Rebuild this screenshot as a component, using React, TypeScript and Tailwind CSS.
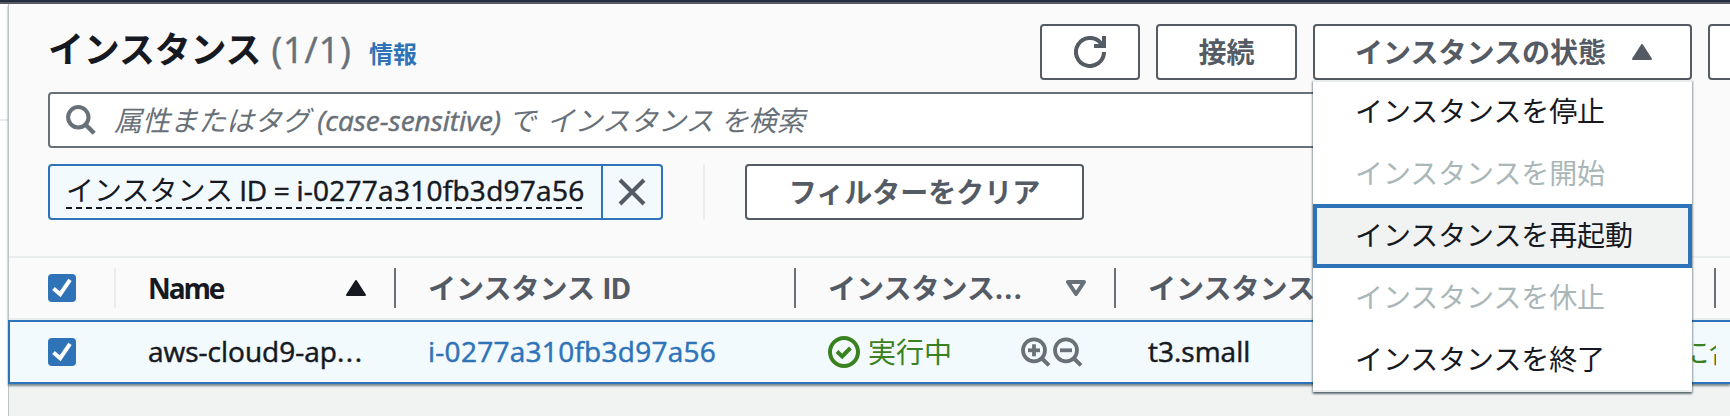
import React from "react";

const JP = "font-['Open_Sans','Noto_Sans_CJK_JP',sans-serif]";

function CheckBox() {
  return (
    <span className="block h-7 w-7 shrink-0 rounded-[4px] bg-[#2e73b8]">
      <svg viewBox="0 0 28 28" className="h-7 w-7" fill="none" stroke="#fff" strokeWidth="4">
        <path d="M5.5 14.5 L12.2 20.2 L22 5.8" />
      </svg>
    </span>
  );
}

function Triangle({ className }: { className: string }) {
  return (
    <svg viewBox="0 0 20 16" className={"h-4 w-5 shrink-0 " + className} fill="currentColor" stroke="currentColor" strokeWidth="2" strokeLinejoin="round">
      <path d="M10 1 L19 15 H1 Z" />
    </svg>
  );
}

function Magnifier({ sign }: { sign: "plus" | "minus" }) {
  return (
    <svg viewBox="0 0 30 30" className="h-[30px] w-[30px] shrink-0" fill="none" stroke="#687078" strokeWidth="3.8">
      <circle cx="13" cy="13.3" r="11" />
      <path d="M20.5 21 L28 28.4" strokeWidth="4" />
      <path d="M7 13.3 H19" />
      {sign === "plus" && <path d="M13 7.3 V19.3" />}
    </svg>
  );
}

function Button({ className, children }: { className: string; children?: React.ReactNode }) {
  return (
    <button
      className={
        "flex h-14 shrink-0 items-center rounded-[4px] border-2 border-[#545b64] bg-white text-[28px] leading-none font-bold whitespace-nowrap text-[#545b64] " +
        className
      }
    >
      {children}
    </button>
  );
}

const menuItems = [
  { label: "インスタンスを停止", state: "first" },
  { label: "インスタンスを開始", state: "disabled" },
  { label: "インスタンスを再起動", state: "active" },
  { label: "インスタンスを休止", state: "disabled" },
  { label: "インスタンスを終了", state: "last" },
];

const itemStyle: Record<string, string> = {
  first: "h-[61px] px-[42px] pb-[3px] text-[#16191f]",
  last: "h-[61px] px-[42px] pb-[2px] text-[#16191f]",
  disabled: "h-[62px] px-[42px] pb-[2px] text-[#aab7b8]",
  active: "-my-px h-16 border-4 border-[#2e73b8] bg-[#f1f3f3] px-[38px] pb-[2px] text-[#16191f]",
};

function StateMenu() {
  return (
    <div className="absolute top-14 left-0 w-[379px] border-y-2 border-[#eaeded] bg-white font-normal tracking-[-0.1px] shadow-[0_2px_2px_0_rgba(0,28,36,0.45),1px_1px_2px_0_rgba(0,28,36,0.25),-1px_1px_2px_0_rgba(0,28,36,0.25)]">
      {menuItems.map((item) => (
        <div key={item.label} className={"flex items-center text-left text-[28px] leading-none " + itemStyle[item.state]}>
          {item.label}
        </div>
      ))}
    </div>
  );
}

export default function App() {
  return (
    <div className={"flex h-[416px] w-[1730px] flex-col overflow-hidden bg-white text-[28px] leading-none whitespace-nowrap text-[#16191f] " + JP}>
      <div className="h-1 shrink-0 border-b-2 border-[#545b64] bg-[#232f3e]" />
      <div className="flex flex-1">
        <aside className="w-2 shrink-0">
          <div className="h-[117px] border-b-2 border-[#eaeded]" />
        </aside>
        <main className="flex w-[1722px] flex-col border-l border-[#bcc4c8] bg-[#f1f3f3]">
          <section className="-ml-px flex h-[380px] flex-col border-l border-[#bcc4c8] bg-[#fafafa] shadow-[0_2px_2px_0_rgba(0,28,36,0.5)]">
            <header className="flex h-[88px] shrink-0 pt-5 pl-[39px]">
              <div className="flex w-[992px] shrink-0 items-baseline pt-2">
                <h1 className="text-[36px] leading-9 font-bold tracking-[-0.2px]">インスタンス</h1>
                <span className="ml-[10px] text-[36px] leading-9 tracking-[1px] text-[#687078] [-webkit-text-stroke:0.5px]">(1/1)</span>
                <a className="ml-[17px] text-[24px] leading-6 font-bold text-[#2e73b8]">情報</a>
              </div>
              <div className="flex gap-4">
                <Button className="w-[100px] justify-center">
                  <svg viewBox="0 0 32 32" className="h-8 w-8" fill="none" stroke="currentColor" strokeWidth="4">
                    <path d="M30 16 A14 14 0 1 1 26.4 6.6 L29 10" />
                    <path d="M30 0 V10 H20" />
                  </svg>
                </Button>
                <Button className="w-[141px] justify-center">接続</Button>
                <div className="relative z-10">
                  <Button className="w-[379px] pl-10">
                    インスタンスの状態
                    <Triangle className="ml-[26px]" />
                  </Button>
                  <StateMenu />
                </div>
                <Button className="w-[160px]" />
              </div>
            </header>

            <div className="ml-[39px] flex h-14 w-[1400px] shrink-0 items-center rounded-[4px] border-2 border-[#687078] bg-white pl-4 text-[#687078]">
              <svg viewBox="0 0 30 30" className="h-[30px] w-[30px]" fill="none" stroke="currentColor" strokeWidth="4">
                <circle cx="12.3" cy="12.3" r="10.2" />
                <path d="M19.2 19.2 L28.2 28.2" strokeWidth="4.4" />
              </svg>
              <span className="ml-[18px] italic">
                属性またはタグ <span className="[-webkit-text-stroke:0.5px]">(case-sensitive)</span> で
                <span className="ml-[3px]"> インスタンス を検索</span>
              </span>
            </div>

            <div className="mt-4 ml-[39px] flex h-14 shrink-0">
              <div className="flex w-[615px] rounded-[4px] border-2 border-[#2e73b8] bg-[#f2fafd]">
                <div className="flex w-[553px] shrink-0 items-start border-r-2 border-[#2e73b8] pt-[7px] pl-4">
                  <span className="h-9 w-[519px] bg-[repeating-linear-gradient(90deg,#16191f_0_6px,transparent_6px_10px)] bg-[length:100%_2px] bg-bottom bg-no-repeat leading-[34px]">
                    インスタンス{" "}
                    <span className="[-webkit-text-stroke:0.5px]">
                      <span className="-ml-px tracking-[-0.3px]">ID = </span>
                      <span className="tracking-[0.27px]">i-0277a310fb3d97a56</span>
                    </span>
                  </span>
                </div>
                <div className="flex flex-1 items-center justify-center">
                  <svg viewBox="0 0 28 28" className="h-7 w-7" stroke="#545b64" strokeWidth="4">
                    <path d="M2 2 L26 26 M26 2 L2 26" />
                  </svg>
                </div>
              </div>
              <div className="ml-10 w-[2px] bg-[#eaeded]" />
              <Button className="ml-10 w-[339px] justify-center">フィルターをクリア</Button>
            </div>

            <div className="mt-9 flex h-16 shrink-0 items-start border-y-2 border-[#eaeded] pt-[10px] font-bold text-[#545b64]">
              <div className="flex h-10 w-[107px] items-center border-r-2 border-[#eaeded] pl-[39px]">
                <CheckBox />
              </div>
              <div className="flex h-10 w-[280px] items-center justify-between border-r-2 border-[#687078] pr-7 pl-8 text-[#16191f]">
                <span className="tracking-[-2.1px]">Name</span>
                <Triangle className="" />
              </div>
              <div className="flex h-10 w-[400px] items-center border-r-2 border-[#687078] pl-8">
                <span>
                  インスタンス <span className="tracking-[-1px]">ID</span>
                </span>
              </div>
              <div className="flex h-10 w-[320px] items-center border-r-2 border-[#687078] pl-8">
                <span className="w-[238px]">
                  インスタンス<span className="tracking-[1.4px]">...</span>
                </span>
                <svg viewBox="0 0 20 16" className="h-4 w-5" fill="none" stroke="#687078" strokeWidth="4" strokeLinejoin="round">
                  <path d="M2 2 H18 L10 14 Z" />
                </svg>
              </div>
              <div className="flex h-10 w-[600px] items-center border-r-2 border-[#687078] pl-8">インスタンス</div>
            </div>

            <div className="-ml-px flex h-16 shrink-0 items-center border-y-2 border-l-2 border-[#2e73b8] bg-[#f2fafd]">
              <div className="w-[106px] shrink-0 pl-[38px]">
                <CheckBox />
              </div>
              <div className="w-[280px] shrink-0 pb-[2px] pl-8 [-webkit-text-stroke:0.5px]">
                aws-cloud9-ap<span className="tracking-[1.5px]">...</span>
              </div>
              <div className="w-[400px] shrink-0 pb-[2px] pl-8 tracking-[0.27px] text-[#2e73b8] [-webkit-text-stroke:0.5px]">i-0277a310fb3d97a56</div>
              <div className="flex w-[320px] shrink-0 items-center pl-8">
                <svg viewBox="0 0 32 32" className="h-8 w-8 shrink-0" fill="none" stroke="#3a8120" strokeWidth="4">
                  <circle cx="16" cy="16" r="14" />
                  <path d="M9 15.5 L14.2 20.5 L22.4 12" />
                </svg>
                <span className="ml-2 w-[153px] pb-px text-[#3a8120]">実行中</span>
                <Magnifier sign="plus" />
                <span className="w-[2px]" />
                <Magnifier sign="minus" />
              </div>
              <div className="w-[565px] shrink-0 pb-[2px] pl-8 [-webkit-text-stroke:0.5px]">t3.small</div>
              <div className="w-[35px] shrink-0 overflow-hidden py-1 text-[#3a8120]">に合</div>
            </div>
          </section>
        </main>
      </div>
    </div>
  );
}
